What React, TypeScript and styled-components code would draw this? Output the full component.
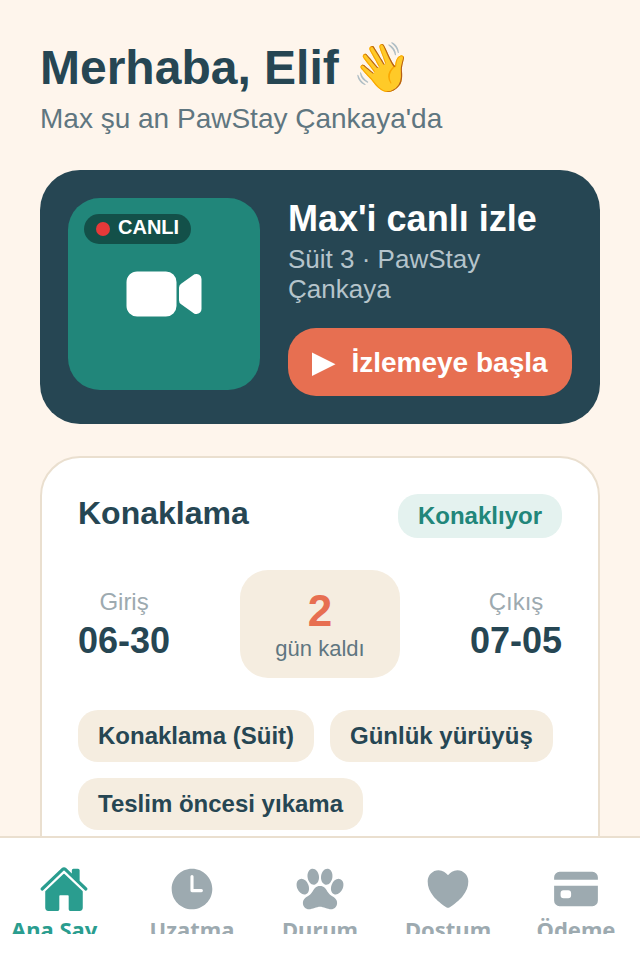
import { createGlobalStyle, styled } from "styled-components";
import { useState } from "react";
import { IconType } from "react-icons";
import { IoCard, IoHeart, IoHome, IoPaw, IoTime, IoVideocam } from "react-icons/io5";

type Tab = {
    id: string;
    label: string;
    icon: IconType;
}

const tabs: Tab[] = [
    { id: "home", label: "Ana Sayfa", icon: IoHome },
    { id: "extend", label: "Uzatma", icon: IoTime },
    { id: "status", label: "Durum", icon: IoPaw },
    { id: "friend", label: "Dostum", icon: IoHeart },
    { id: "payment", label: "Ödeme", icon: IoCard },
];

const services = ["Konaklama (Süit)", "Günlük yürüyüş", "Teslim öncesi yıkama"];

function LiveCard() {
    return (
        <Live>
            <Camera>
                <LiveBadge><LiveDot /><LiveText>CANLI</LiveText></LiveBadge>
                <IoVideocam size={80} />
            </Camera>
            <LiveInfo>
                <LiveTitle>Max'i canlı izle</LiveTitle>
                <LivePlace>Süit 3 · PawStay Çankaya</LivePlace>
                <WatchButton type="button">
                    <svg width="24" height="28" viewBox="0 0 24 28" aria-hidden="true">
                        <path d="M0 3.5L23.5 15.3L0 27Z" fill="currentColor" />
                    </svg>
                    İzlemeye başla
                </WatchButton>
            </LiveInfo>
        </Live>
    )
}

function StayCard() {
    return (
        <Stay>
            <StayHead>
                <StayTitle>Konaklama</StayTitle>
                <Status>Konaklıyor</Status>
            </StayHead>
            <Dates>
                <DateItem>
                    <DateLabel>Giriş</DateLabel>
                    <DateValue>06-30</DateValue>
                </DateItem>
                <Remaining>
                    <DayCount>2</DayCount>
                    <DayLabel>gün kaldı</DayLabel>
                </Remaining>
                <DateItem>
                    <DateLabel>Çıkış</DateLabel>
                    <DateValue>07-05</DateValue>
                </DateItem>
            </Dates>
            <Services>
                {services.map((service) => <Service key={service}>{service}</Service>)}
            </Services>
        </Stay>
    )
}

function App() {
    const [activeTab, setActiveTab] = useState("home");

    return (
        <Screen>
            <GlobalStyle />
            <Content>
                <Greeting>Merhaba, Elif 👋</Greeting>
                <Location>Max şu an PawStay Çankaya'da</Location>
                <LiveCard />
                <StayCard />
            </Content>
            <TabBar>
                {tabs.map(({ id, label, icon: Icon }) => (
                    <TabLink key={id} href={`#${id}`} $active={id === activeTab} onClick={() => setActiveTab(id)}>
                        <Icon size={50} />
                        <TabLabel>{label}</TabLabel>
                    </TabLink>
                ))}
            </TabBar>
        </Screen>
    )
}

const GlobalStyle = createGlobalStyle`
    * {
        box-sizing: border-box;
    }
    body {
        margin: 0;
        background-color: #fef5ec;
        color: #264653;
        font-family: "Liberation Sans", Arial, sans-serif;
    }
    h1, h2, p, ul {
        margin: 0;
        padding: 0;
    }
`

const Screen = styled.div`
    display: flex;
    flex-direction: column;
    height: 100vh;
`

const Content = styled.main`
    flex: 1;
    min-height: 0;
    padding: 40px;
    overflow-y: auto;
    scrollbar-width: none;
`

const Greeting = styled.h1`
    font-size: 48px;
    line-height: 56px;
`

const Location = styled.p`
    margin-top: 6px;
    color: #5f7680;
    font-size: 28px;
    line-height: 34px;
`

const Live = styled.section`
    display: flex;
    align-items: flex-start;
    gap: 28px;
    margin-top: 34px;
    padding: 28px;
    border-radius: 40px;
    background-color: #264653;
    color: white;
`

const Camera = styled.div`
    position: relative;
    display: flex;
    flex-shrink: 0;
    align-items: center;
    justify-content: center;
    width: 192px;
    height: 192px;
    border-radius: 32px;
    background-color: #21867a;
`

const LiveBadge = styled.div`
    position: absolute;
    top: 16px;
    left: 16px;
    display: flex;
    align-items: center;
    gap: 8px;
    height: 30px;
    padding: 0 12px;
    border-radius: 16px;
    background-color: rgba(0, 0, 0, 0.4);
`

const LiveDot = styled.span`
    width: 14px;
    height: 14px;
    border-radius: 50%;
    background-color: #e63939;
`

const LiveText = styled.span`
    align-self: flex-start;
    font-size: 20px;
    font-weight: bold;
    line-height: 26px;
`

const LiveInfo = styled.div`
    flex: 1;
    min-width: 0;
`

const LiveTitle = styled.h2`
    font-size: 36px;
    line-height: 42px;
`

const LivePlace = styled.p`
    margin-top: 4px;
    color: #b5c4cb;
    font-size: 26px;
    line-height: 30px;
`

const WatchButton = styled.button`
    display: flex;
    align-items: center;
    justify-content: center;
    gap: 15px;
    width: 100%;
    margin-top: 24px;
    padding: 19px 20px 17px;
    border: none;
    border-radius: 28px;
    background-color: #e76f51;
    color: white;
    font-family: inherit;
    font-size: 28px;
    font-weight: bold;
    line-height: 32px;
    white-space: nowrap;
    cursor: pointer;
`

const Stay = styled.section`
    margin-top: 32px;
    padding: 36px 36px 48px;
    border: 2px solid #eadfcf;
    border-radius: 40px;
    background-color: white;
`

const StayHead = styled.div`
    display: flex;
    align-items: flex-start;
    justify-content: space-between;
`

const StayTitle = styled.h2`
    font-size: 32px;
    line-height: 38px;
`

const Status = styled.span`
    padding: 8px 20px;
    border-radius: 20px;
    background-color: #e4f2ef;
    color: #21867a;
    font-size: 24px;
    font-weight: bold;
    line-height: 28px;
`

const Dates = styled.div`
    display: flex;
    align-items: center;
    justify-content: space-between;
    margin-top: 32px;
    text-align: center;
`

const DateItem = styled.div`
    display: flex;
    flex-direction: column;
    gap: 4px;
    padding-top: 2px;
`

const DateLabel = styled.span`
    color: #9daab0;
    font-size: 24px;
    line-height: 28px;
`

const DateValue = styled.span`
    font-size: 36px;
    font-weight: bold;
    line-height: 42px;
`

const Remaining = styled.div`
    display: flex;
    flex-direction: column;
    min-width: 160px;
    padding: 16px 28px;
    border-radius: 28px;
    background-color: #f5ede0;
`

const DayCount = styled.span`
    color: #e76f51;
    font-size: 44px;
    font-weight: bold;
    line-height: 50px;
`

const DayLabel = styled.span`
    color: #5f7680;
    font-size: 22px;
    line-height: 26px;
`

const Services = styled.ul`
    display: flex;
    flex-wrap: wrap;
    gap: 16px;
    margin-top: 32px;
    list-style: none;
`

const Service = styled.li`
    padding: 12px 20px;
    border-radius: 20px;
    background-color: #f5ede0;
    font-size: 24px;
    font-weight: bold;
    line-height: 28px;
`

const TabBar = styled.nav`
    display: flex;
    flex-shrink: 0;
    height: 124px;
    padding-bottom: 26px;
    border-top: 2px solid #eadfcf;
    background-color: white;
`

// the label is taller than the room left under the icon, so the link clips it
const TabLink = styled.a<{ $active: boolean }>`
    display: flex;
    flex: 1;
    flex-direction: column;
    align-items: center;
    min-width: 0;
    padding: 26px 11px 0;
    overflow: hidden;
    color: ${({ $active }) => $active ? "#2a9d8f" : "#9daab0"};
    text-decoration: none;
    svg {
        flex-shrink: 0;
    }
`

const TabLabel = styled.span`
    flex-shrink: 0;
    max-width: 100%;
    overflow: hidden;
    font-family: "Noto Sans", sans-serif;
    font-size: 22px;
    font-weight: bold;
    line-height: 30px;
    text-overflow: ellipsis;
    white-space: nowrap;
`

export default App
